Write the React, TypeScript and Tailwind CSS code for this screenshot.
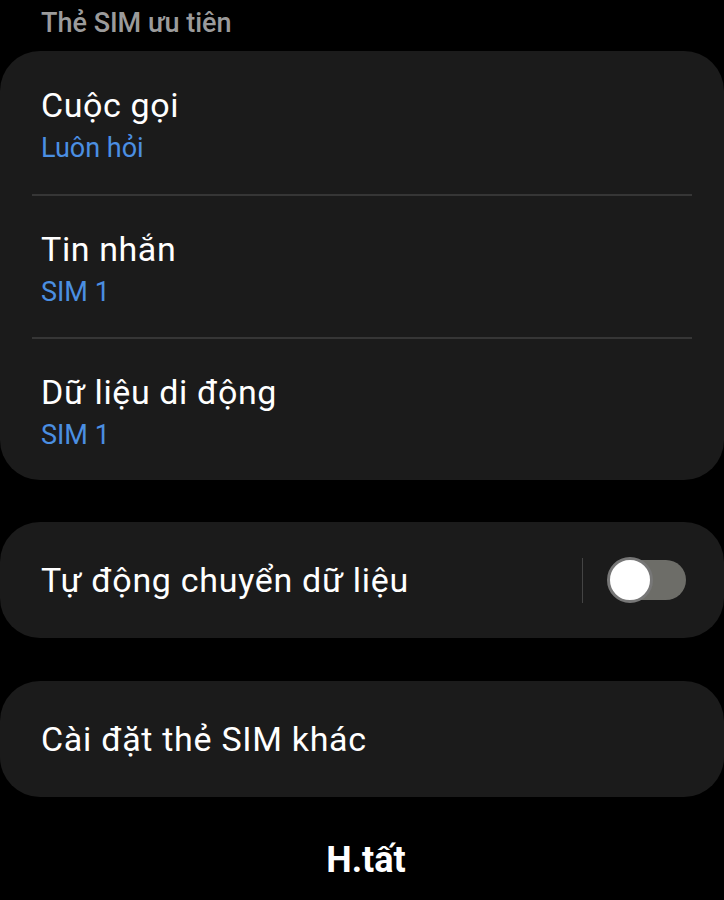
import React, { useState } from 'react';

const font = { fontFamily: 'Roboto, "Noto Sans", sans-serif' };

interface PrefRow {
  title: string;
  value: string;
}

const rows: PrefRow[] = [
  { title: 'Cuộc gọi', value: 'Luôn hỏi' },
  { title: 'Tin nhắn', value: 'SIM 1' },
  { title: 'Dữ liệu di động', value: 'SIM 1' },
];

const App: React.FC = () => {
  const [autoSwitch, setAutoSwitch] = useState(false);

  return (
    <div className="w-[724px] h-[900px] bg-black text-white overflow-hidden" style={font}>
      <div className="px-[41px] pt-[5px] h-[51px] text-[27px] font-medium text-[#9b9b9b] leading-[36px]">
        Thẻ SIM ưu tiên
      </div>

      <div className="bg-[#1b1b1b] rounded-[40px] h-[429px] flex flex-col">
        {rows.map((r, i) => (
          <div key={r.title} className="flex-1 flex flex-col">
            {i > 0 && <div className="mx-[32px] h-[2px] bg-[#363636]" />}
            <div className="flex-1 flex flex-col justify-center px-[41px] pt-[3px]">
              <div className="text-[34px] tracking-[0.6px] leading-[48px] text-white">{r.title}</div>
              <div className="text-[27px] leading-[38px] text-[#4b8fe2]">{r.value}</div>
            </div>
          </div>
        ))}
      </div>

      <div className="mt-[42px] bg-[#1b1b1b] rounded-[40px] h-[116px] flex items-center pl-[41px] pr-[38px]">
        <div className="flex-1 text-[34px] tracking-[0.7px] text-white">Tự động chuyển dữ liệu</div>
        <div className="w-px h-[45px] bg-[#444444] mr-[27px]" />
        <button
          type="button"
          onClick={() => setAutoSwitch((v) => !v)}
          className={`relative w-[76px] h-[40px] rounded-full ${autoSwitch ? 'bg-[#3e91ff]' : 'bg-[#6d6d68]'}`}
        >
          <span
            className={`absolute top-1/2 -translate-y-1/2 w-[46px] h-[46px] rounded-full bg-white border-[3px] border-[#777777] ${autoSwitch ? 'left-[33px]' : 'left-[-3px]'}`}
          />
        </button>
      </div>

      <div className="mt-[43px] bg-[#1b1b1b] rounded-[40px] h-[116px] flex items-center px-[41px]">
        <div className="text-[34px] tracking-[0.7px] text-white">Cài đặt thẻ SIM khác</div>
      </div>

      <div className="pt-[36px] pl-[8px] text-center text-[36px] font-bold text-white">H.tất</div>
    </div>
  );
};

export default App;
